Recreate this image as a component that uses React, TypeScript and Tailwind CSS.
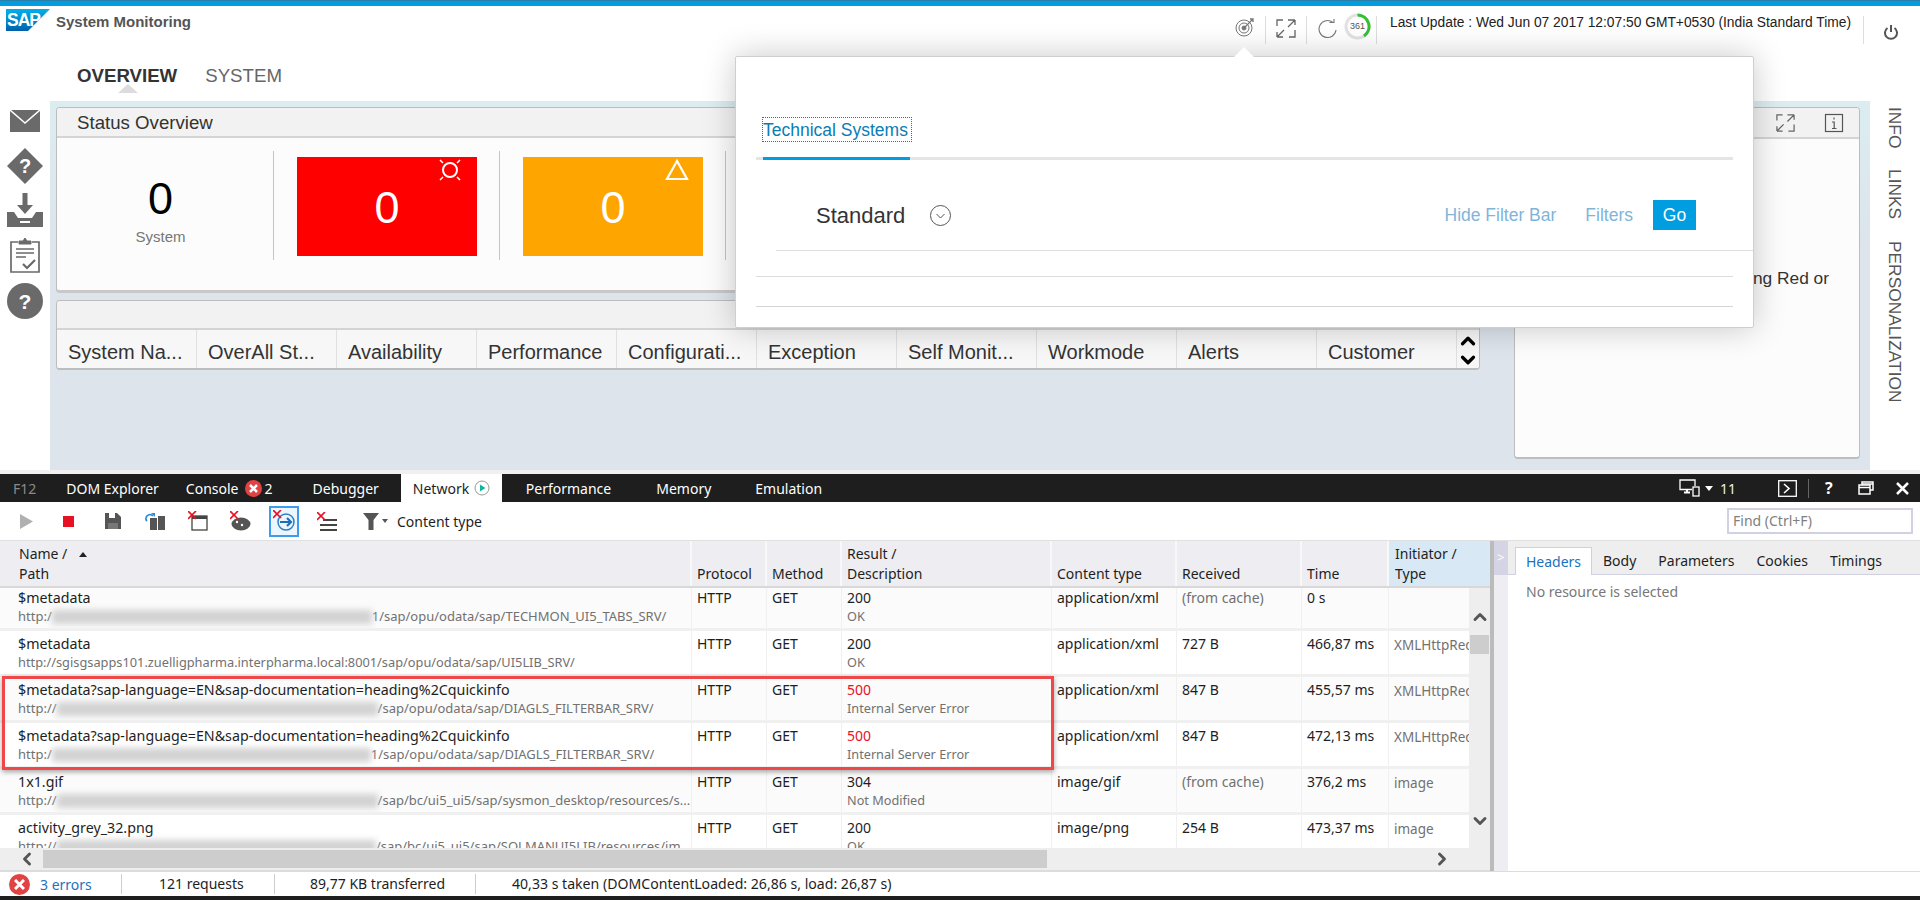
import React from "react";
import { ChevronLeft, ChevronRight, ChevronUp, ChevronDown } from "lucide-react";

const Expand = ({ c = "#666", s = 22 }: { c?: string; s?: number }) => (
  <svg width={s} height={s} viewBox="0 0 22 22" fill="none" stroke={c} strokeWidth="1.3">
    <path d="M2 9V3h6M13 3l7 0M20 3l-7 7M20 3v5M2 20l7-7M2 20h6M2 20v-5M20 13v7h-6" />
  </svg>
);

const RowData = [
  { n: "$metadata", pre: "http:/", blur: 320, suf: "1/sap/opu/odata/sap/TECHMON_UI5_TABS_SRV/", code: "200", desc: "OK", type: "application/xml", rec: "(from cache)", time: "0 s", init: "" },
  { n: "$metadata", pre: "http://sgisgsapps101.zuelligpharma.interpharma.local:8001/sap/opu/odata/sap/UI5LIB_SRV/", blur: 0, suf: "", code: "200", desc: "OK", type: "application/xml", rec: "727 B", time: "466,87 ms", init: "XMLHttpRequest" },
  { n: "$metadata?sap-language=EN&sap-documentation=heading%2Cquickinfo", pre: "http://", blur: 321, suf: "/sap/opu/odata/sap/DIAGLS_FILTERBAR_SRV/", code: "500", desc: "Internal Server Error", type: "application/xml", rec: "847 B", time: "455,57 ms", init: "XMLHttpRequest" },
  { n: "$metadata?sap-language=EN&sap-documentation=heading%2Cquickinfo", pre: "http:/", blur: 319, suf: "1/sap/opu/odata/sap/DIAGLS_FILTERBAR_SRV/", code: "500", desc: "Internal Server Error", type: "application/xml", rec: "847 B", time: "472,13 ms", init: "XMLHttpRequest" },
  { n: "1x1.gif", pre: "http://", blur: 321, suf: "/sap/bc/ui5_ui5/sap/sysmon_desktop/resources/s...", code: "304", desc: "Not Modified", type: "image/gif", rec: "(from cache)", time: "376,2 ms", init: "image" },
  { n: "activity_grey_32.png", pre: "http://", blur: 321, suf: "/sap/bc/ui5_ui5/sap/SOLMANUI5LIB/resources/im...", code: "200", desc: "OK", type: "image/png", rec: "254 B", time: "473,37 ms", init: "image" },
];

const Cols = ["w-[692px]", "w-[75px]", "w-[75px]", "w-[210px]", "w-[125px]", "w-[125px]", "w-[87px]", "w-[102px]"];

function TableRow({ r, i }: { r: (typeof RowData)[number]; i: number }) {
  const cell = "shrink-0 h-full pl-[5px] border-r border-[#f0f0f0] leading-[19px] pt-[3px] overflow-hidden whitespace-nowrap";
  return (
    <div className={`flex h-[46px] border-b-[3px] border-[#f0f0f0] text-[14px] text-[#1e1e1e] ${i % 2 === 0 ? "bg-[#fbfbfb]" : "bg-white"}`}>
      <div className={`${Cols[0]} ${cell} pl-[18px]`}>
        <div className="text-[14.25px]">{r.n}</div>
        <div className={`flex items-center text-[#717171] ${r.blur > 0 ? "text-[13px]" : "text-[12.8px]"}`}>
          <span>{r.pre}</span>
          {r.blur > 0 && <span className="inline-block h-[14px] bg-[#d2d2d2] blur-[3px]" style={{ width: r.blur }} />}
          <span>{r.suf}</span>
        </div>
      </div>
      <div className={`${Cols[1]} ${cell}`}>HTTP</div>
      <div className={`${Cols[2]} ${cell}`}>GET</div>
      <div className={`${Cols[3]} ${cell}`}>
        <div className={r.code === "500" ? "text-[#e81123]" : ""}>{r.code}</div>
        <div className="text-[#717171] text-[12.7px]">{r.desc}</div>
      </div>
      <div className={`${Cols[4]} ${cell}`}>{r.type}</div>
      <div className={`${Cols[5]} ${cell} ${r.rec.startsWith("(") ? "text-[#717171]" : ""}`}>{r.rec}</div>
      <div className={`${Cols[6]} ${cell}`}>{r.time}</div>
      <div className={`${Cols[7]} ${cell} text-[#717171] text-[13.5px] pt-[5px]`}>{r.init}</div>
    </div>
  );
}

function X({ x = 0, y = 0 }: { x?: number; y?: number }) {
  return <path d={`M${x} ${y}l8 8M${x + 8} ${y}l-8 8`} stroke="#e81123" strokeWidth="1.7" fill="none" />;
}

export default function App() {
  return (
    <div className="relative w-[1920px] h-[900px] overflow-hidden bg-white flex flex-col font-['Liberation_Sans',Arial,sans-serif]">
      {/* SAP application */}
      <div className="h-[470px] shrink-0 flex flex-col">
        <div className="h-[6px] shrink-0 bg-[#009de0] border-t border-[#2a7ea8]" />
        <div className="h-[95px] shrink-0 flex">
          <div className="flex flex-col w-[1235px] shrink-0">
            <div className="flex items-start pl-[6px] pt-[3px]">
              <svg width="44" height="22" viewBox="0 0 44 22">
                <defs>
                  <linearGradient id="sap" x1="0" y1="0" x2="0" y2="1">
                    <stop offset="0" stopColor="#00b1eb" />
                    <stop offset="1" stopColor="#0060ab" />
                  </linearGradient>
                </defs>
                <polygon points="0,0 44,0 22,22 0,22" fill="url(#sap)" />
                <text x="1" y="17" fontSize="17.5" fontWeight="700" fill="#fff" fontFamily="Liberation Sans" letterSpacing="-1">SAP</text>
              </svg>
              <span className="ml-[6px] mt-[4px] text-[15px] leading-[17px] font-bold text-[#555]">System Monitoring</span>
            </div>
            <div className="flex pl-[77px] mt-[33px] text-[18.67px] leading-[24px]">
              <span className="relative font-bold text-[#333]">
                OVERVIEW
                <span className="absolute left-[41px] top-[20px] w-0 h-0 border-x-[10px] border-x-transparent border-b-[9px] border-b-[#dcdcdc]" />
              </span>
              <span className="ml-[28px] text-[#666]">SYSTEM</span>
            </div>
          </div>
          <div className="flex items-start pt-[10px]">
            <svg width="20" height="20" viewBox="0 0 20 20" fill="none" stroke="#777" strokeWidth="1" className="mt-[1px]">
              <circle cx="9" cy="11" r="8" />
              <circle cx="9" cy="11" r="5" />
              <circle cx="9" cy="11" r="2" fill="#777" />
              <path d="M9 11L18 2M15 2l3 0 0 3" strokeWidth="1.3" />
            </svg>
            <div className="w-px h-[28px] bg-[#ddd] ml-[10px]" />
            <div className="ml-[9px] mt-[1px]"><Expand /></div>
            <div className="w-px h-[28px] bg-[#ddd] ml-[9px]" />
            <svg width="20" height="20" viewBox="0 0 20 20" fill="none" stroke="#777" strokeWidth="1.1" className="ml-[11px] mt-[3px]">
              <path d="M15 3.5A8.5 8.5 0 1 0 18 11" />
              <path d="M11.5 3.5h4.5V0" />
            </svg>
            <div className="relative ml-[6px] -mt-[3px] w-[27px] h-[27px] flex items-center justify-center">
              <svg width="27" height="27" viewBox="0 0 27 27" fill="none" className="absolute inset-0">
                <circle cx="13.5" cy="13.5" r="11.5" stroke="#e2e2e2" strokeWidth="3" />
                <path d="M13.5 2A11.5 11.5 0 0 1 20 23" stroke="#30c030" strokeWidth="3" />
              </svg>
              <span className="text-[9px] text-[#555] leading-none">361</span>
            </div>
            <div className="w-px h-[28px] bg-[#ddd] ml-[5px]" />
            <span className="ml-[13px] text-[13.8px] leading-[16px] text-[#222] whitespace-nowrap -mt-[1px]">Last Update : Wed Jun 07 2017 12:07:50 GMT+0530 (India Standard Time)</span>
            <div className="w-px h-[28px] bg-[#ddd] ml-[12px]" />
            <svg width="14" height="16" viewBox="0 0 14 16" fill="none" stroke="#555" strokeWidth="2" className="ml-[20px] mt-[8px]">
              <path d="M7 1v7" />
              <path d="M3.5 4A6 6 0 1 0 10.500 4" />
            </svg>
          </div>
        </div>
        <div className="flex-1 flex min-h-0">
          {/* Left rail */}
          <div className="w-[50px] shrink-0 flex flex-col items-center pt-[9px] text-white">
            <svg width="30" height="22" viewBox="0 0 30 22">
              <rect width="30" height="22" fill="#6a6a6a" />
              <path d="M0 0l15 13L30 0" stroke="#fff" strokeWidth="1.5" fill="none" />
            </svg>
            <svg width="36" height="36" viewBox="0 0 36 36" className="mt-[16px]">
              <polygon points="18,0 36,18 18,36 0,18" fill="#6a6a6a" />
              <text x="18" y="25" fontSize="20" fontWeight="700" textAnchor="middle" fill="#fff" fontFamily="Liberation Sans">?</text>
            </svg>
            <svg width="36" height="34" viewBox="0 0 36 34" className="mt-[9px]">
              <path d="M15.500 0h5v12h5.500L18 21 10 12h5.500z" fill="#6a6a6a" />
              <path d="M0 19h7l4 6h14l4-6h7v15H0z" fill="#6a6a6a" />
              <rect x="13" y="28" width="10" height="2" fill="#fff" />
            </svg>
            <svg width="30" height="36" viewBox="0 0 30 36" fill="none" stroke="#6a6a6a" className="mt-[10px]">
              <path d="M8 5H1v30h28V5h-7" strokeWidth="1.7" />
              <path d="M9 7V4h4l2-3 2 3h4v3z" fill="#6a6a6a" strokeWidth="1" />
              <path d="M6 12h18M6 16h18M6 20h10" strokeWidth="1.6" />
              <path d="M13 27l4 4 8-8" strokeWidth="2.2" />
            </svg>
            <svg width="36" height="36" viewBox="0 0 36 36" className="mt-[10px]">
              <circle cx="18" cy="18" r="18" fill="#6a6a6a" />
              <text x="18" y="25.500" fontSize="21" fontWeight="700" textAnchor="middle" fill="#fff" fontFamily="Liberation Sans">?</text>
            </svg>
          </div>
          {/* Main */}
          <div className="w-[1820px] shrink-0 flex pl-[6px] pt-[6px] bg-gradient-to-b from-[#dbedf1] to-[#dde4ec] to-[40%]">
            <div className="w-[1424px] shrink-0 flex flex-col gap-[7px]">
              <div className="h-[186px] flex flex-col rounded-[4px] border border-[#bdbdbd] border-b-[3px] border-b-[#c8c8c8] bg-[#fcfcfc] overflow-hidden">
                <div className="h-[30px] shrink-0 bg-[#f2f2f2] border-b-2 border-[#d4d4d4] pl-[20px] text-[18.67px] leading-[30px] text-[#333]">Status Overview</div>
                <div className="flex pt-[13px]">
                  <div className="w-[217px] h-[109px] shrink-0 border-r border-[#c4c4c4] flex flex-col items-center pr-[9px] text-center">
                    <div className="text-[45px] leading-[52px] text-black mt-[22px]">0</div>
                    <div className="text-[15px] leading-[18px] text-[#777] mt-[3px]">System</div>
                  </div>
                  <div className="w-[226px] h-[109px] shrink-0 border-r border-[#c4c4c4] pl-[23px] pt-[6px]">
                    <div className="relative w-[180px] h-[99px] bg-[#ff0000] flex items-center justify-center text-white text-[45px] pt-[3px]">
                      0
                      <svg width="24" height="24" viewBox="0 0 24 24" fill="none" stroke="#fff" className="absolute right-[15px] top-[1px]">
                        <circle cx="12" cy="12" r="7" strokeWidth="2" />
                        <path d="M2 2l3 3M22 2l-3 3M2 22l3-3M22 22l-3-3" strokeWidth="1.500" />
                      </svg>
                    </div>
                  </div>
                  <div className="w-[226px] h-[109px] shrink-0 border-r border-[#c4c4c4] pl-[23px] pt-[6px]">
                    <div className="relative w-[180px] h-[99px] bg-[#ffa500] flex items-center justify-center text-white text-[45px] pt-[3px]">
                      0
                      <svg width="24" height="23" viewBox="0 0 24 23" fill="none" stroke="#fff" strokeWidth="2.200" className="absolute right-[14px] top-[1px]">
                        <path d="M12 3L2 21h20z" />
                      </svg>
                    </div>
                  </div>
                </div>
              </div>
              <div className="h-[70px] flex flex-col rounded-[4px] border border-[#bdbdbd] border-b-2 bg-[#f5f5f5] overflow-hidden">
                <div className="h-[29px] shrink-0 bg-[#f2f2f2] border-b-2 border-[#d4d4d4]" />
                <div className="flex-1 flex text-[20px] text-[#333] bg-[#f7f7f7]">
                  {["System Na...", "OverAll St...", "Availability", "Performance", "Configurati...", "Exception", "Self Monit...", "Workmode", "Alerts", "Customer"].map((t) => (
                    <div key={t} className="w-[140px] shrink-0 border-r border-[#e0e0e0] pl-[11px] pt-[3px] flex items-center whitespace-nowrap">{t}</div>
                  ))}
                  <div className="flex-1 flex flex-col items-center justify-center text-black">
                    <ChevronUp size={22} strokeWidth={3.500} className="-mb-[3px]" />
                    <ChevronDown size={22} strokeWidth={3.500} />
                  </div>
                </div>
              </div>
            </div>
            <div className="ml-[34px] w-[346px] h-[352px] rounded-[4px] border border-[#bdbdbd] border-b-2 bg-[#fcfcfc] flex flex-col overflow-hidden">
              <div className="h-[31px] shrink-0 bg-[#f2f2f2] border-b-2 border-[#d4d4d4] flex items-center justify-end pr-[15px] gap-[28px]">
                <Expand s={21} />
                <svg width="20" height="20" viewBox="0 0 20 20" fill="none" stroke="#555" strokeWidth="1.200">
                  <rect x="1.500" y="1.500" width="17" height="17" />
                  <path d="M10 4.500v2M8 9h2.200v6.500M8 15.500h4.500" />
                </svg>
              </div>
              <div className="pt-[129px] pr-[30px] text-right text-[17.33px] leading-[20px] text-[#333]">ng Red or</div>
            </div>
          </div>
          {/* Right rail */}
          <div className="w-[50px] shrink-0 flex flex-col items-center pt-[6px] gap-[21px] text-[17.33px] text-[#555] leading-[20px]">
            <span className="[writing-mode:vertical-rl]">INFO</span>
            <span className="[writing-mode:vertical-rl]">LINKS</span>
            <span className="[writing-mode:vertical-rl]">PERSONALIZATION</span>
          </div>
        </div>
      </div>
      <div className="h-[4px] shrink-0 bg-[#f0f0f0]" />

      {/* F12 tools */}
      <div className="flex-1 min-h-0 flex flex-col font-['Noto_Sans',sans-serif] text-[#1e1e1e]">
        <div className="h-[28px] shrink-0 bg-[#1e1e1e] flex items-center text-[14px] text-white whitespace-nowrap">
          <span className="ml-[13px] text-[#8a8a8a]">F12</span>
          <span className="ml-[30px]">DOM Explorer</span>
          <span className="ml-[27px]">Console</span>
          <span className="ml-[6px] w-[17px] h-[17px] rounded-full bg-[#e04343] flex items-center justify-center">
            <svg width="9" height="9" viewBox="0 0 9 9" stroke="#fff" strokeWidth="2.500"><path d="M1 1l7 7M8 1L1 8" /></svg>
          </span>
          <span className="ml-[3px]">2</span>
          <span className="ml-[40px]">Debugger</span>
          <div className="ml-[22px] w-[101px] h-full bg-white text-[#1e1e1e] flex items-center pl-[12px]">
            Network
            <svg width="16" height="16" viewBox="0 0 16 16" className="ml-[5px]" fill="none">
              <circle cx="8" cy="8" r="7" stroke="#999" strokeWidth="1" />
              <path d="M6 4.500L11.500 8 6 11.500z" fill="#10b5a0" />
            </svg>
          </div>
          <span className="ml-[24px]">Performance</span>
          <span className="ml-[45px]">Memory</span>
          <span className="ml-[44px]">Emulation</span>
          <div className="ml-auto flex items-center pr-[11px]">
            <svg width="21" height="18" viewBox="0 0 21 18" fill="none" stroke="#fff" strokeWidth="1.300">
              <path d="M13 10.500H1V1h15v6" />
              <path d="M5 13.500h6M8 11v2.500" strokeWidth="2" />
              <rect x="14" y="8" width="6" height="9" fill="#1e1e1e" />
            </svg>
            <span className="ml-[5px] w-0 h-0 border-x-[4px] border-x-transparent border-t-[5px] border-t-white" />
            <span className="ml-[7px] text-[#eee]">11</span>
            <svg width="19" height="17" viewBox="0 0 19 17" fill="none" stroke="#fff" strokeWidth="1.300" className="ml-[42px]">
              <rect x="0.700" y="0.700" width="17.600" height="15.600" />
              <path d="M6 4l5 4.500-5 4.500" strokeWidth="1.600" />
            </svg>
            <div className="ml-[11px] w-px h-[19px] bg-[#666]" />
            <span className="ml-[16px] text-[16px] font-bold w-[9px]">?</span>
            <svg width="16" height="14" viewBox="0 0 16 14" fill="none" stroke="#fff" strokeWidth="1.500" className="ml-[24px]">
              <rect x="1" y="4" width="11" height="9" />
              <path d="M1 6.500h11M4 4V1h11v8h-3M4 3h11" />
            </svg>
            <svg width="13" height="13" viewBox="0 0 13 13" stroke="#fff" strokeWidth="2.500" className="ml-[22px]"><path d="M1 1l11 11M12 1L1 12" /></svg>
          </div>
        </div>
        <div className="h-[38px] shrink-0 bg-white flex items-center text-[14px] whitespace-nowrap">
          <svg width="13" height="15" viewBox="0 0 13 15" className="ml-[20px]"><path d="M0 0l13 7.500L0 15z" fill="#b0b0b0" /></svg>
          <div className="ml-[30px] w-[11px] h-[11px] bg-[#e81123]" />
          <svg width="16" height="16" viewBox="0 0 16 16" className="ml-[31px]">
            <path d="M0 0h12l4 4v12H0z" fill="#555" />
            <rect x="4" y="0" width="6" height="5" fill="#fff" />
            <rect x="3" y="10" width="10" height="6" fill="#777" />
          </svg>
          <svg width="21" height="18" viewBox="0 0 21 18" className="ml-[24px]">
            <rect x="5" y="6" width="7" height="12" fill="#555" />
            <rect x="13" y="4" width="7" height="14" fill="#555" />
            <path d="M1 6a4 4 0 0 1 7-2" stroke="#2a8fd8" strokeWidth="1.800" fill="none" />
            <path d="M6 1h4v4z" fill="#2a8fd8" />
            <path d="M2 9a3 3 0 0 1-1-3" stroke="#2a8fd8" strokeWidth="1.800" fill="none" />
          </svg>
          <svg width="20" height="20" viewBox="0 0 20 20" className="ml-[22px]" fill="none">
            <rect x="4" y="5" width="15" height="14" stroke="#444" strokeWidth="1.300" />
            <rect x="4" y="5" width="15" height="3" fill="#444" />
            <X x={0} y={0} />
          </svg>
          <svg width="21" height="20" viewBox="0 0 21 20" className="ml-[22px]" fill="none">
            <ellipse cx="11" cy="13" rx="9.500" ry="6.500" fill="#555" />
            <circle cx="7" cy="11" r="1.200" fill="#fff" />
            <circle cx="12" cy="14" r="1.200" fill="#fff" />
            <X x={0} y={0} />
          </svg>
          <div className="ml-[18px] w-[30px] h-[31px] border-2 border-[#3b9cf0] bg-[#eef6fd] flex items-center justify-center">
            <svg width="23" height="22" viewBox="0 0 23 22" fill="none">
              <circle cx="13" cy="12" r="8" stroke="#2a7fc8" strokeWidth="1.500" />
              <path d="M7 12h11M14 8l4 4-4 4" stroke="#1c6fb8" strokeWidth="2.200" />
              <X x={0} y={0} />
            </svg>
          </div>
          <svg width="20" height="19" viewBox="0 0 20 19" className="ml-[18px]" fill="none">
            <path d="M6 8h14M3 13h17M3 18h17" stroke="#444" strokeWidth="2" />
            <X x={0} y={0} />
          </svg>
          <svg width="16" height="17" viewBox="0 0 16 17" className="ml-[26px]"><path d="M0 0h16l-5.500 7v10h-5V7z" fill="#555" /></svg>
          <span className="ml-[3px] w-0 h-0 border-x-[3.500px] border-x-transparent border-t-[4px] border-t-[#555]" />
          <span className="ml-[9px]">Content type</span>
          <div className="ml-auto mr-[7px] w-[186px] h-[26px] border-2 border-[#d0d2e4] bg-white text-[14px] leading-[22px] pl-[4px] text-[#808080]">Find (Ctrl+F)</div>
        </div>
        <div className="flex-1 min-h-0 flex border-t border-[#e0e0e0]">
          <div className="w-[1490px] shrink-0 flex flex-col">
            <div className="h-[47px] shrink-0 flex bg-[#ededf2] border-b-2 border-[#d8d8d8] text-[14px] leading-[20px] whitespace-nowrap">
              <div className="w-[692px] shrink-0 border-r-2 border-[#f8f8f8] pl-[19px] pt-[3px]">
                <div className="flex items-center">Name /<span className="ml-[12px] w-0 h-0 border-x-[4px] border-x-transparent border-b-[5px] border-b-[#222]" /></div>
                <div>Path</div>
              </div>
              {["Protocol", "Method"].map((t, i) => (
                <div key={t} className={`${Cols[i + 1]} shrink-0 border-r-2 border-[#f8f8f8] pl-[5px] pt-[23px]`}>{t}</div>
              ))}
              <div className="w-[210px] shrink-0 border-r-2 border-[#f8f8f8] pl-[5px] pt-[3px]">Result /<br />Description</div>
              <div className="w-[125px] shrink-0 border-r-2 border-[#f8f8f8] pl-[5px] pt-[23px]">Content type</div>
              <div className="w-[125px] shrink-0 border-r-2 border-[#f8f8f8] pl-[5px] pt-[23px]">Received</div>
              <div className="w-[87px] shrink-0 border-r-2 border-[#f8f8f8] pl-[5px] pt-[23px]">Time</div>
              <div className="flex-1 bg-[#d8e9f5] pl-[6px] pt-[3px]">Initiator /<br />Type</div>
            </div>
            <div className="flex-1 min-h-0 flex">
              <div className="w-[1469px] shrink-0 overflow-hidden">
                <div className="w-[1491px] -mt-[3px]">
                  {RowData.map((r, i) => <TableRow key={i} r={r} i={i} />)}
                </div>
              </div>
              <div className="flex-1 relative bg-[#eeeeee] flex flex-col items-center text-[#555]">
                <ChevronUp size={20} strokeWidth={3.500} className="mt-[19px]" />
                <div className="mt-[8px] w-[19px] h-[19px] bg-[#cdcdcd]" />
                <ChevronDown size={20} strokeWidth={3.500} className="mt-auto mb-[17px]" />
              </div>
            </div>
            <div className="h-[23px] shrink-0 bg-[#eeeeee] border-b border-[#dcdcdc] flex items-center text-[#555]">
              <ChevronLeft size={20} strokeWidth={3.500} className="ml-[17px]" />
              <div className="ml-[6px] w-[1004px] h-[18px] bg-[#cdcdcd]" />
              <ChevronRight size={20} strokeWidth={3.500} className="ml-[385px]" />
            </div>
          </div>
          <div className="w-[4px] shrink-0 bg-[#bbbbbb]" />
          <div className="w-[14px] shrink-0 bg-[#ededf2]">
            <div className="h-[34px] bg-[#d4d4e4] text-white text-[13px] flex items-center justify-center">&gt;</div>
          </div>
          <div className="flex-1 flex flex-col min-w-0">
            <div className="h-[34px] shrink-0 bg-[#eeeeee] border-b border-[#d0d0e0] flex items-end text-[14px] pl-[7px]">
              <div className="w-[77px] h-[28px] bg-white border border-b-0 border-[#d0d0e0] text-[#1a73c0] flex items-center justify-center -mb-px">Headers</div>
              <div className="flex items-center h-[28px] gap-[22px] pl-[11px]">
                <span>Body</span><span>Parameters</span><span>Cookies</span><span>Timings</span>
              </div>
            </div>
            <div className="pl-[18px] pt-[7px] text-[14px] leading-[20px] text-[#777]">No resource is selected</div>
          </div>
        </div>
        <div className="h-[25px] shrink-0 bg-white border-t border-[#dcdcdc] flex items-center text-[14px] whitespace-nowrap">
          <div className="w-[122px] shrink-0 h-[20px] border-r border-[#ccc] flex items-center pl-[9px]">
            <span className="w-[21px] h-[21px] rounded-full bg-[#e04343] flex items-center justify-center shrink-0">
              <svg width="11" height="11" viewBox="0 0 11 11" stroke="#fff" strokeWidth="3"><path d="M1 1l9 9M10 1L1 10" /></svg>
            </span>
            <span className="ml-[10px] text-[#1a73c0]">3 errors</span>
          </div>
          <div className="w-[153px] shrink-0 h-[20px] border-r border-[#ccc] pl-[37px] leading-[20px]">121 requests</div>
          <div className="w-[201px] shrink-0 h-[20px] border-r border-[#ccc] pl-[35px] leading-[20px]">89,77 KB transferred</div>
          <div className="pl-[36px] text-[14.1px]">40,33 s taken (DOMContentLoaded: 26,86 s, load: 26,87 s)</div>
        </div>
        <div className="h-[4px] shrink-0 bg-[#1e1e1e]" />
      </div>

      {/* Popover */}
      <div className="absolute left-[735px] top-[56px] w-[1019px] h-[272px] bg-white border border-[#cfcfcf] rounded-[2px] shadow-[0_0_32px_rgba(0,0,0,0.22)] flex flex-col">
        <span className="absolute left-[498px] -top-[10px] w-0 h-0 border-x-[10px] border-x-transparent border-b-[10px] border-b-white" />
        <div className="ml-[27px] mt-[61px] w-[148px] h-[23px] outline-1 outline-dotted outline-[#0a7db5] text-[17.5px] leading-[25px] text-[#0a7db5] whitespace-nowrap">Technical Systems</div>
        <div className="ml-[20px] mt-[16px] w-[977px] h-[3px] bg-[#e5e5e5] pl-[7px] shrink-0">
          <div className="w-[147px] h-[3px] bg-[#009de0]" />
        </div>
        <div className="ml-[40px] h-[91px] shrink-0 border-b border-[#e0e0e0] pl-[40px] pr-[57px] pt-[40px] pb-[20px] flex items-center">
          <span className="text-[22px] text-[#333] pt-[1px]">Standard</span>
          <svg width="21" height="21" viewBox="0 0 21 21" fill="none" stroke="#555" strokeWidth="1" className="ml-[25px]">
            <circle cx="10.500" cy="10.500" r="10" />
            <path d="M6.500 9l4 4 4-4" />
          </svg>
          <span className="ml-auto text-[17.5px] text-[#7fb5d9]">Hide Filter Bar</span>
          <span className="ml-[29px] text-[17.5px] text-[#7fb5d9]">Filters</span>
          <div className="ml-[20px] w-[43px] h-[30px] bg-[#009de0] text-white text-[17.5px] flex items-center justify-center">Go</div>
        </div>
        <div className="mx-[20px] h-[26px] shrink-0 border-b border-[#dcdcdc]" />
        <div className="mx-[20px] h-[30px] shrink-0 border-b border-[#d4d4d4]" />
      </div>

      {/* Red annotation */}
      <div className="absolute left-[2px] top-[676px] w-[1052px] h-[94px] border-[3px] border-[#f04848] shadow-[0_2px_5px_rgba(0,0,0,0.35)]" />
    </div>
  );
}
